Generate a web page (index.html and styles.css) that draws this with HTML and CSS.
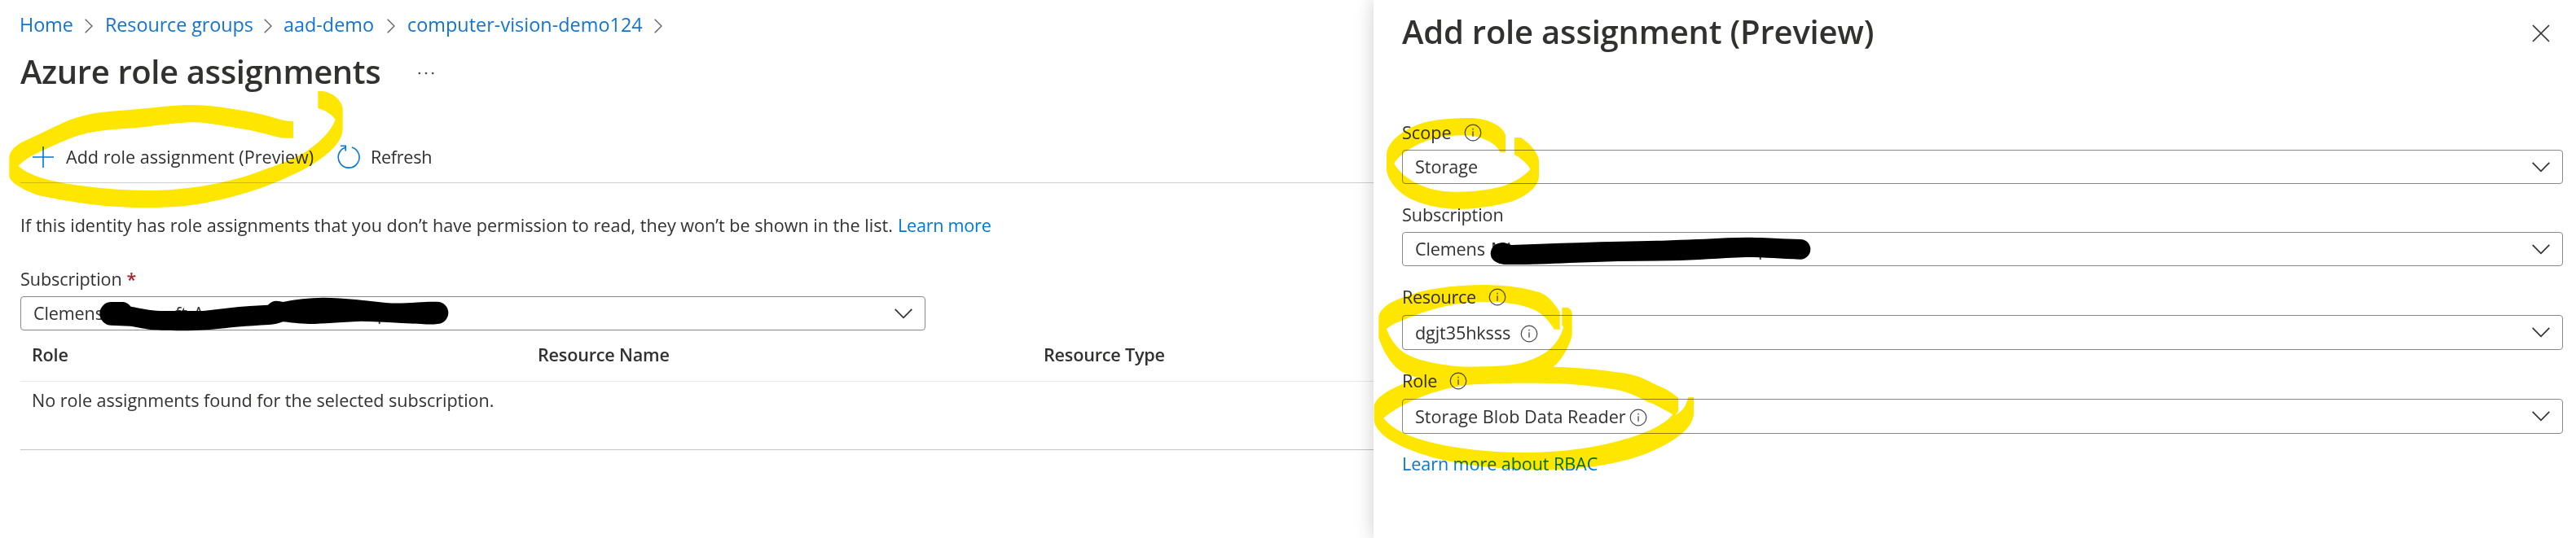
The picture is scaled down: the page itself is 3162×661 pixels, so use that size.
FILE: index.html
```
<!DOCTYPE html>
<html lang="en">
<head>
<meta charset="utf-8">
<title>Azure role assignments</title>
<link rel="stylesheet" href="styles.css">
</head>
<body>
<svg class="defs" aria-hidden="true">
  <symbol id="next" viewBox="0 0 10 18"><path d="M.7.7 9 9 .7 17.3" fill="none" stroke="#605e5c" stroke-width="1.3"/></symbol>
  <symbol id="down" viewBox="0 0 22 13"><path d="M.7.9 11 11.4 21.3.9" fill="none" stroke="#323130" stroke-width="1.7"/></symbol>
  <symbol id="info" viewBox="0 0 22 22"><circle cx="11" cy="11" r="9.8" fill="none" stroke="#484644" stroke-width="1.2"/><path d="M11 9.2v6.6M11 5.8v1.7" fill="none" stroke="#484644" stroke-width="1.3"/></symbol>
</svg>
<div class="screen">
  <main class="main">
    <nav class="crumbs">
      <a class="c1">Home</a><svg class="next"><use href="#next"/></svg>
      <a class="c2">Resource groups</a><svg class="next"><use href="#next"/></svg>
      <a class="c3">aad-demo</a><svg class="next"><use href="#next"/></svg>
      <a class="c4">computer-vision-demo124</a><svg class="next"><use href="#next"/></svg>
    </nav>
    <header class="title-row">
      <h1 class="title">Azure role assignments</h1>
      <svg class="more" viewBox="0 0 20 4"><g fill="#484644"><circle cx="1.8" cy="2" r="1.3"/><circle cx="10" cy="2" r="1.3"/><circle cx="18.2" cy="2" r="1.3"/></g></svg>
    </header>
    <div class="toolbar">
      <svg class="plus" viewBox="0 0 26 26"><path d="M13 0v26M0 13h26" stroke="#0078d4" stroke-width="1.6"/></svg>
      <span class="cmd-add">Add role assignment (Preview)</span>
      <svg class="refresh" viewBox="0 0 28 30"><path d="M17.8 2.9A12.9 12.9 0 1 1 9.6 3.2M4 1.3h6.2v6.2" fill="none" stroke="#0078d4" stroke-width="1.6"/></svg>
      <span class="cmd-refresh">Refresh</span>
    </div>
    <p class="note"><span>If this identity has role assignments that you don’t have permission to read, they won’t be shown in the list.</span><a class="learn">Learn more</a></p>
    <label class="sub-label">Subscription<span class="star">*</span></label>
    <div class="select main-select">
      <span class="clemens">Clemens</span><span class="ft">ft</span><span class="big-a">A</span><span class="low-p">p</span>
      <svg class="down"><use href="#down"/></svg>
    </div>
    <section class="table">
      <div class="thead"><span>Role</span><span>Resource Name</span><span>Resource Type</span></div>
      <div class="tbody">No role assignments found for the selected subscription.</div>
    </section>
  </main>

  <aside class="panel">
    <header class="panel-head">
      <h2 class="panel-title">Add role assignment (Preview)</h2>
      <svg class="close" viewBox="0 0 22 22"><path d="m1 1 20 20M21 1 1 21" stroke="#323130" stroke-width="1.7"/></svg>
    </header>
    <div class="field f1">
      <label class="label"><span class="l-scope">Scope</span><svg class="info"><use href="#info"/></svg></label>
      <div class="select"><span class="v-storage">Storage</span><svg class="down"><use href="#down"/></svg></div>
    </div>
    <div class="field f2">
      <label class="label"><span class="l-sub">Subscription</span></label>
      <div class="select"><span class="clemens">Clemens</span><span class="mi">Mi</span><span class="panel-p">p</span><svg class="down"><use href="#down"/></svg></div>
    </div>
    <div class="field f3">
      <label class="label"><span class="l-res">Resource</span><svg class="info"><use href="#info"/></svg></label>
      <div class="select"><span class="v-id">dgjt35hksss</span><svg class="info"><use href="#info"/></svg><svg class="down"><use href="#down"/></svg></div>
    </div>
    <div class="field f4">
      <label class="label"><span class="l-role">Role</span><svg class="info"><use href="#info"/></svg></label>
      <div class="select"><span class="v-reader">Storage Blob Data Reader</span><svg class="info"><use href="#info"/></svg><svg class="down"><use href="#down"/></svg></div>
    </div>
    <a class="rbac">Learn more about RBAC</a>
  </aside>

  <svg class="marker" viewBox="0 0 3162 661">
    <g fill="#ffe600">
      <path transform="translate(0 100) scale(.33333)" d="M1080 147H1070Q1045 146 1015 136C950 115 870 104 805 94C740 84 670 87 610 92C540 99 480 105 400 111C330 117 275 134 240 149C190 171 140 197 90 220C60 234 34 254 34 285V350C40 375 90 403 140 419C200 433 300 450 380 458C480 467 570 467 660 461C760 452 860 427 950 397C1030 369 1100 336 1150 307C1210 268 1262 224 1262 175V98C1255 62 1215 36 1183 36H1171V99C1200 107 1225 124 1235 141C1215 192 1170 230 1120 263C1060 297 990 318 930 341C840 371 710 398 590 401C480 405 360 395 260 379C190 367 110 351 68 311C100 277 160 254 220 226C260 208 305 190 370 182C420 175 480 174 540 167C610 159 670 151 710 151C770 151 850 168 910 178C960 187 1010 204 1035 208Q1045 209 1080 209Z"/>
      <path transform="translate(1680 130) scale(.33333)" d="M504 171H484C475 147 445 129 410 117C370 104 300 109 255 117C205 127 120 165 94 213C125 265 185 298 255 312C330 324 425 313 480 300C530 287 570 262 595 234C585 212 560 193 537 180V117H560C590 135 622 170 627 200V260C625 305 565 341 520 355C440 376 370 382 310 380C230 375 150 352 110 312C82 285 66 257 66 230V175C75 125 130 88 185 68C235 50 310 45 370 45C430 43 495 72 504 108Z"/>
      <path transform="translate(1680 340) scale(.33333)" d="M704 194H684C665 165 645 140 618 126C570 101 500 92 430 92C330 92 240 115 155 148C115 165 85 175 66 193C80 230 103 264 135 283C190 314 280 330 375 332C460 329 520 334 590 309C660 285 702 245 718 183L712 179V113H733Q749 120 749 138V213C742 255 710 308 681 332C770 334 860 343 930 354C1000 363 1030 385 1060 399C1100 414 1120 430 1140 446V496L1128 510C1160 495 1170 470 1177 444H1197V510C1190 550 1160 578 1110 609C1040 650 970 673 890 689C800 707 690 713 600 711C470 709 340 694 240 667C150 642 85 610 55 585C35 565 20 545 20 530V475C30 440 80 415 130 394C150 384 165 377 183 371C150 366 120 352 100 333C70 302 50 265 37 225V145C50 103 100 85 155 66C220 42 320 31 420 30C510 30 580 42 630 58C665 71 685 103 704 129ZM1120 507C1080 487 1060 472 1030 462C1000 449 975 431 920 418C850 406 770 396 690 394C600 391 480 392 390 397C280 403 130 456 55 521C90 565 150 589 220 608C320 633 440 649 590 648C730 646 850 628 960 594C1020 574 1090 547 1120 507Z"/>
    </g>
  </svg>
  <svg class="ink" viewBox="0 0 3162 661">
    <path transform="translate(100 350) scale(.33333)" d="M110 63H155Q172 67 182 80C220 87 250 94 290 96H445C500 91 560 82 620 78L687 74Q700 59 718 59Q733 60 742 63C790 52 840 48 890 47C970 48 1050 58 1120 66C1180 70 1220 65 1280 62H1310A41 41 0 0 1 1310 144Q1290 147 1250 144C1180 141 1100 135 1030 134C950 137 890 143 840 144C800 144 770 138 742 136Q720 145 690 147C610 151 540 158 480 164C410 171 310 169 270 166C230 163 210 156 180 152L110 149A43 43 0 0 1 110 63Z"/>
    <path transform="translate(1810 280) scale(.33333)" d="M100 54Q120 55 136 63C220 61 300 57 380 55C500 50 600 49 690 47C780 44 860 41 930 37C1000 33 1080 36 1130 40L1200 42A37 37 0 0 1 1200 116C1130 114 1070 108 1000 108C900 112 820 118 720 121L530 123L350 129C260 133 180 136 110 135C75 131 59 115 59 94Q61 60 100 54Z"/>
  </svg>
</div>
</body>
</html>
```
FILE: styles.css
```
* { box-sizing: border-box; }
body {
  margin: 0;
  background: #fff;
  color: #323130;
  font-family: "Open Sans", "Noto Sans", sans-serif;
  font-size: 21.6px;
  line-height: 30px;
  white-space: nowrap;
}
.defs { position: absolute; width: 0; height: 0; }
.screen {
  position: relative;
  display: flex;
  width: 3162px;
  height: 661px;
  overflow: hidden;
}
svg { flex: none; display: block; }
a { color: #0078d4; }
span, a { flex: none; }

.main { width: 1686px; padding-left: 25px; }
.crumbs {
  display: flex;
  align-items: center;
  height: 60px;
  margin-left: -1px;
  font-size: 23.4px;
}
.crumbs a { color: #1374cf; }
.next { width: 10px; height: 18px; margin-top: 4px; }
.c1 { width: 80px; letter-spacing: -.1px; }
.c2 { width: 195px; margin-left: 15px; letter-spacing: -.1px; }
.c3 { width: 127px; margin-left: 14px; }
.c4 { width: 303px; margin-left: 15px; letter-spacing: .03px; }

.title-row { display: flex; align-items: center; height: 55px; }
.title {
  width: 488px;
  margin: 0;
  font-size: 40px;
  font-weight: 600;
  letter-spacing: -.38px;
  line-height: 55px;
}
.more { width: 20px; height: 4px; margin-top: 5px; }

.toolbar {
  display: flex;
  align-items: center;
  height: 110px;
  padding: 46px 0 0 15px;
  border-bottom: 1px solid #d0cfce;
}
.plus { width: 26px; height: 26px; }
.cmd-add { width: 333px; margin-left: 15px; }
.refresh { width: 28px; height: 30px; }
.cmd-refresh { margin-left: 13px; letter-spacing: -.3px; }

.note { display: flex; margin: 37px 0 0; }
.note span { width: 1077px; }
.learn { letter-spacing: -.25px; }
.sub-label { display: flex; margin-top: 36px; letter-spacing: -.1px; }
.star { margin-left: 6px; color: #a4262c; font-weight: 600; }

.select {
  display: flex;
  align-items: center;
  height: 42px;
  padding: 0 15px 0 15px;
  border: 1px solid #8a8886;
  border-radius: 4px;
}
.down { width: 22px; height: 13px; margin-left: auto; }
.main-select { width: 1111px; margin-top: 6px; }
.clemens { width: 87px; letter-spacing: -.15px; }
.ft { width: 14px; margin-left: 87px; }
.big-a { width: 14px; margin-left: 8px; }
.low-p { margin-left: 212px; }
.mi { width: 26px; margin-left: 6px; }
.panel-p { margin-left: 302px; }

.thead {
  display: grid;
  grid-template-columns: 621px 621px 1fr;
  align-items: center;
  height: 63px;
  padding: 0 0 2px 14px;
  border-bottom: 1px solid #e8e7e6;
  font-weight: 600;
  letter-spacing: -.2px;
}
.tbody {
  height: 84px;
  padding: 8px 0 0 14px;
  border-bottom: 1px solid #c8c6c4;
  letter-spacing: -.04px;
}

.panel {
  display: flex;
  flex-direction: column;
  width: 1476px;
  padding: 0 16px 0 35px;
  background: #fff;
  box-shadow: 0 0 22px rgba(0, 0, 0, .2);
}
.panel-head {
  display: flex;
  justify-content: space-between;
  align-items: center;
  height: 77px;
  padding-right: 16px;
}
.panel-title {
  margin: 0;
  font-size: 40px;
  font-weight: 600;
  letter-spacing: -.2px;
}
.close { width: 22px; height: 22px; margin-top: 5px; }
.label { display: flex; align-items: center; height: 30px; }
.info { width: 22px; height: 22px; }
.f1 { margin-top: 71px; }
.f2, .f3, .f4 { margin-top: 23px; }
.f1 .select, .f2 .select { margin-top: 6px; }
.f3 .select, .f4 .select { height: 43px; margin-top: 7px; }
.f3 .select .info, .f4 .select .info { margin-top: 2px; }
.l-scope { width: 76px; }
.l-res { width: 106px; letter-spacing: -.3px; }
.l-role { width: 58px; letter-spacing: -.2px; }
.l-sub { letter-spacing: -.1px; }
.v-id { width: 129px; letter-spacing: -.1px; }
.v-reader { width: 263px; }
.rbac { margin-top: 22px; letter-spacing: -.08px; }

/* Hand-drawn highlighter and redaction strokes over the content. */
.marker, .ink {
  position: absolute;
  inset: 0;
  width: 3162px;
  height: 661px;
  pointer-events: none;
}
.marker { mix-blend-mode: multiply; }
```
